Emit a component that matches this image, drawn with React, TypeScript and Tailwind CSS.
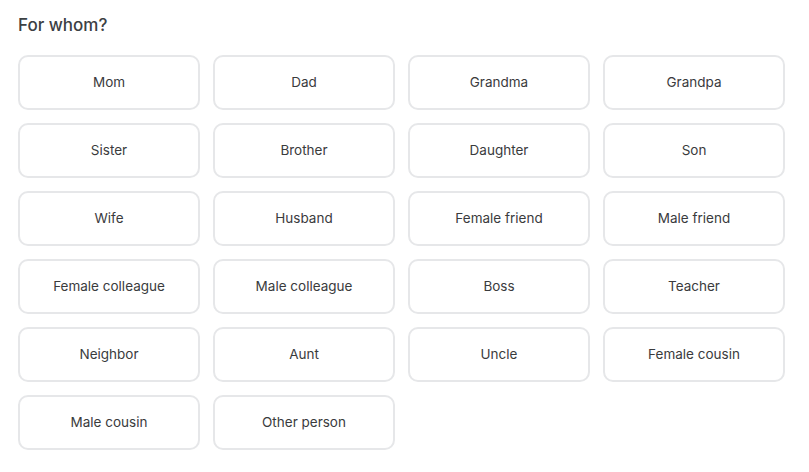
import React from "react";

const items = [
  "Mom", "Dad", "Grandma", "Grandpa",
  "Sister", "Brother", "Daughter", "Son",
  "Wife", "Husband", "Female friend", "Male friend",
  "Female colleague", "Male colleague", "Boss", "Teacher",
  "Neighbor", "Aunt", "Uncle", "Female cousin",
  "Male cousin", "Other person",
];

export default function App() {
  return (
    <div className="w-[809px] h-[472px] bg-white px-[18px] pt-[13px]" style={{ fontFamily: "Inter, 'Open Sans', sans-serif" }}>
      <h2 className="text-[17px] leading-[24px] font-medium text-[#3c4043]">For whom?</h2>
      <div className="mt-[18px] grid grid-cols-4 gap-[13px] w-[767px]">
        {items.map((t) => (
          <button
            key={t}
            className="h-[55px] rounded-[10px] border-2 border-[#e6e7e9] bg-white text-[13.5px] font-normal text-[#3a3b3d] flex items-center justify-center pb-[1px]"
          >
            {t}
          </button>
        ))}
      </div>
    </div>
  );
}
